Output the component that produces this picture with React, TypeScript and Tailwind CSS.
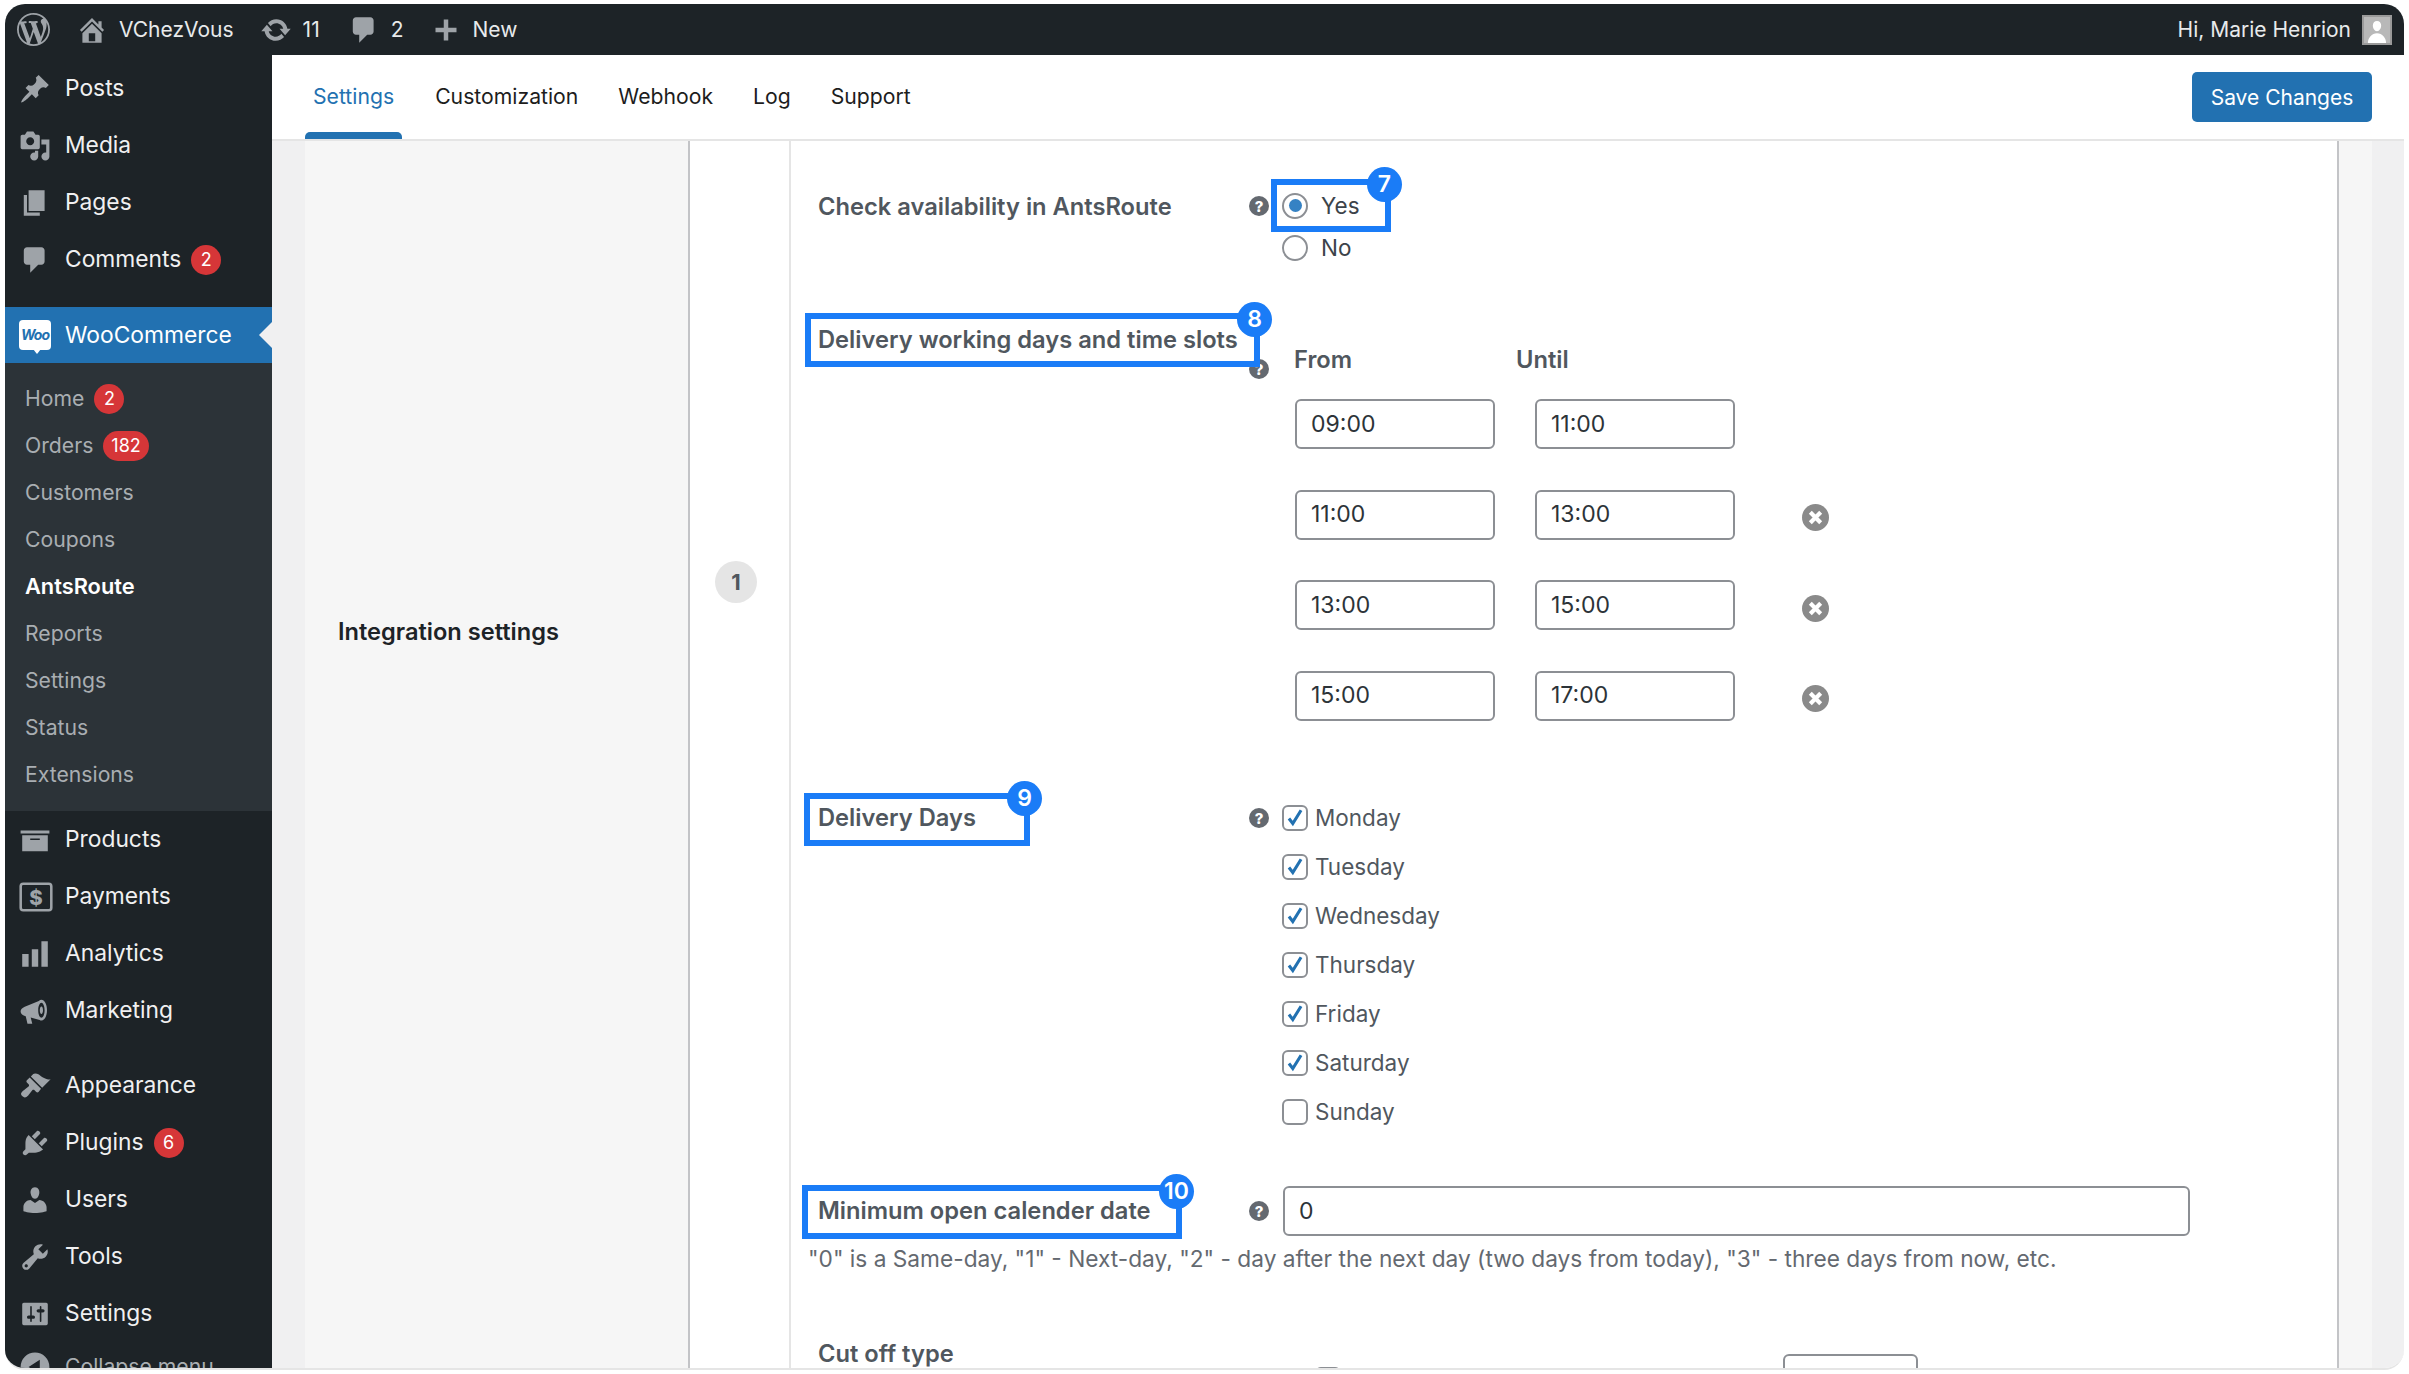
const paths: Record<string, string> = {
  wp: "M20 10c0-5.51-4.49-10-10-10C4.48 0 0 4.49 0 10c0 5.52 4.48 10 10 10 5.51 0 10-4.48 10-10zM7.78 15.37L4.37 6.22c.55-.02 1.17-.08 1.17-.08.5-.06.44-1.13-.06-1.11 0 0-1.45.11-2.37.11-.18 0-.37 0-.58-.01C4.12 2.69 6.87 1.11 10 1.11c2.33 0 4.45.87 6.05 2.34-.68-.11-1.65.39-1.65 1.58 0 .74.45 1.36.9 2.1.35.61.55 1.36.55 2.46 0 1.49-1.4 5-1.4 5l-3.03-8.37c.54-.02.82-.17.82-.17.5-.05.44-1.25-.06-1.22 0 0-1.44.12-2.38.12-.87 0-2.33-.12-2.33-.12-.5-.03-.56 1.2-.06 1.22l.92.08 1.26 3.41zM17.41 10c.24-.64.74-1.87.43-4.25.7 1.29 1.05 2.71 1.05 4.25 0 3.29-1.73 6.24-4.4 7.78.97-2.59 1.94-5.2 2.92-7.78zM6.1 18.09C3.12 16.65 1.11 13.53 1.11 10c0-1.3.23-2.48.72-3.59C3.25 10.3 4.67 14.2 6.1 18.09zm4.03-6.63l2.58 6.98c-.86.29-1.76.45-2.71.45-.79 0-1.57-.11-2.29-.33.81-2.38 1.62-4.74 2.42-7.1z",
  home: "M16 8.5l1.53 1.53-1.06 1.06L10 4.62l-6.47 6.47-1.06-1.06L10 2.5l4 4v-2h2v4zm-6-2.46l6 5.99V18H4v-5.97zM12 17v-5H8v5h4z",
  update: "M10.2 3.28c3.53 0 6.43 2.61 6.92 6h2.08l-3.5 4-3.5-4h2.32c-.45-1.97-2.21-3.45-4.32-3.45-1.45 0-2.73.71-3.54 1.78L4.95 5.66C6.23 4.2 8.11 3.28 10.2 3.28zm-.4 13.44c-3.52 0-6.43-2.61-6.92-6H.8l3.5-4c1.17 1.33 2.33 2.67 3.5 4H5.48c.45 1.97 2.21 3.45 4.32 3.45 1.45 0 2.73-.71 3.54-1.78l1.71 1.95c-1.28 1.46-3.15 2.38-5.25 2.38z",
  comment: "M5 2h9c1.1 0 2 .9 2 2v7c0 1.1-.9 2-2 2h-2l-5 5v-5H5c-1.1 0-2-.9-2-2V4c0-1.1.9-2 2-2z",
  plus: "M17 8.5v3h-5.5V17h-3v-5.5H3v-3h5.5V3h3v5.5z",
  posts: "M10.44 3.02l1.82-1.82 6.36 6.35-1.83 1.82c-1.05-.68-2.48-.57-3.41.36l-.75.75c-.92.93-1.04 2.35-.35 3.41l-1.83 1.82-2.41-2.41-2.8 2.79c-.42.42-3.38 2.71-3.8 2.29s1.86-3.39 2.28-3.81l2.79-2.79L4.1 9.36l1.83-1.82c1.05.69 2.48.57 3.41-.36l.75-.75c.93-.92 1.04-2.35.35-3.41z",
  media: "M13 11V4c0-.55-.45-1-1-1h-1.67L9 1H5L3.67 3H2c-.55 0-1 .45-1 1v7c0 .55.45 1 1 1h10c.55 0 1-.45 1-1zM7 4.5c1.38 0 2.5 1.12 2.5 2.5S8.38 9.5 7 9.5 4.5 8.38 4.5 7 5.62 4.5 7 4.5zM14 6h5v10.5c0 1.38-1.12 2.5-2.5 2.5S14 17.88 14 16.5s1.12-2.5 2.5-2.5c.17 0 .34.02.5.05V9h-3V6zm-4 8.05V13h2v3.5c0 1.38-1.12 2.5-2.5 2.5S7 17.88 7 16.5 8.12 14 9.5 14c.17 0 .34.02.5.05z",
  pages: "M6 15V2h10v13H6zm-1 1h8v2H3V5h2v11z",
  products: "M19 4v2H1V4h18zM2 7h16v10H2V7zm11 3V9H7v1h6z",
  analytics: "M18 18V2h-4v16h4zm-6 0V7H8v11h4zm-6 0v-8H2v8h4z",
  marketing: "M17.5 9.5c0-3.6-1.6-6.5-3.5-6.500-.6 0-1.100.3-1.600.8L3.600 7.300C2 8 1 8.900 1 10.200c0 1.300.9 2.300 2.300 2.800l.9.3L5.300 18h3l-1-4 5.600 1.600c.3.2.7.4 1.100.4 1.900 0 3.500-2.900 3.500-6.500zM14 14.200c-1 0-2-2-2-4.700s1-4.700 2-4.700 2 2 2 4.700-1 4.700-2 4.700zm0-7c-.6 0-1 1-1 2.300s.4 2.300 1 2.300 1-1 1-2.300-.4-2.300-1-2.300z",
  appearance: "M14.48 11.06L7.41 3.99l1.5-1.5c.5-.56 2.3-.47 3.51.32 1.21.8 1.43 1.28 2.91 2.1 1.18.64 2.45 1.26 4.45.85zm-.71.71L6.7 4.7 4.93 6.47c-.39.39-.39 1.02 0 1.41l1.06 1.06c.39.39.39 1.03 0 1.42-.6.6-1.43 1.11-2.21 1.69-.35.26-.7.53-1.01.84-1.5 1.5-2.1 2.09-.6 3.59 1.5 1.5 3 0 3.6-.6.31-.31.58-.66.84-1.01.58-.78 1.09-1.61 1.69-2.21.39-.39 1.03-.39 1.42 0l1.06 1.06c.39.39 1.02.39 1.41 0z",
  plugins: "M13.11 4.36L9.87 7.6 8 5.73l3.24-3.24c.35-.34 1.05-.2 1.56.32.52.51.66 1.21.31 1.55zm-8 1.77l.91-1.12 9.01 9.01-1.19.84c-.71.71-2.63 1.16-3.82 1.16H6.14L4.9 17.26c-.59.59-1.54.59-2.12 0-.59-.58-.59-1.53 0-2.12l1.24-1.24v-3.88c0-1.13.4-3.19 1.09-3.89zm7.26 3.97l3.24-3.24c.34-.35 1.04-.21 1.55.31.52.51.66 1.21.31 1.55l-3.24 3.25z",
  users: "M10 9.25c-2.27 0-2.73-3.44-2.73-3.44C7 4.02 7.82 2 9.97 2c2.16 0 2.98 2.02 2.71 3.81 0 0-.41 3.44-2.68 3.44zm0 2.57L12.72 10c2.39 0 4.52 2.33 4.52 4.53v2.49s-3.65 1.13-7.24 1.13c-3.65 0-7.24-1.13-7.24-1.13v-2.49c0-2.25 1.94-4.48 4.47-4.48z",
  tools: "M16.68 9.77c-1.34 1.34-3.3 1.67-4.95.99l-5.41 6.52c-.99.99-2.59.99-3.58 0s-.99-2.59 0-3.57l6.52-5.42c-.68-1.65-.35-3.61.99-4.95 1.28-1.28 3.12-1.62 4.72-1.06l-2.89 2.89 2.82 2.82 2.86-2.87c.53 1.58.18 3.39-1.08 4.65zM3.81 16.21c.4.39 1.04.39 1.43 0 .4-.4.4-1.04 0-1.43-.39-.4-1.03-.4-1.43 0-.39.39-.39 1.03 0 1.43z",
  settings: "M18 16V4c0-.55-.45-1-1-1H3c-.55 0-1 .45-1 1v12c0 .55.45 1 1 1h14c.55 0 1-.45 1-1zM8 11h1c.55 0 1 .45 1 1s-.45 1-1 1H8v1.5c0 .28-.22.5-.5.5s-.5-.22-.5-.5V13H6c-.55 0-1-.45-1-1s.45-1 1-1h1V5.5c0-.28.22-.5.5-.5s.5.22.5.5V11zm5-2h-1c-.55 0-1-.45-1-1s.45-1 1-1h1V5.5c0-.28.22-.5.5-.5s.5.22.5.5V7h1c.55 0 1 .45 1 1s-.45 1-1 1h-1v5.5c0 .28-.22.5-.5.5s-.5-.22-.5-.5V9z",
  collapse: "M10 1a9 9 0 1 0 0 18 9 9 0 0 0 0-18zm3 4.5v9L6 10z",
};

const Icon = ({ name, className }: { name: string; className: string }) => (
  <svg viewBox="0 0 20 20" className={`fill-current shrink-0 ${className}`}>
    <path d={paths[name]} fillRule="evenodd" />
  </svg>
);

const PaymentsIcon = () => (
  <svg viewBox="0 0 20 20" className="w-[34px] h-[34px] shrink-0">
    <rect x="1" y="2.2" width="18" height="15.6" rx="1.5" fill="none" stroke="currentColor" strokeWidth="1.5" />
    <text x="10" y="14.6" textAnchor="middle" fontSize="12" fontWeight="800" fill="currentColor" fontFamily="Inter">$</text>
  </svg>
);

const WooIcon = () => (
  <div className="relative w-[32px] h-[30px] rounded-[4px] bg-white flex items-center justify-center shrink-0">
    <span className="text-[#2271b1] text-[14px] font-bold italic leading-none tracking-[-1px]">Woo</span>
    <span className="absolute left-[14px] -bottom-[4px] w-0 h-0 border-x-[4px] border-x-transparent border-t-[5px] border-t-white" />
  </div>
);

const Badge = ({ value }: { value: string }) => (
  <span className="h-[30px] min-w-[30px] px-[8px] ml-[10px] rounded-full bg-[#d63638] text-white text-[18px] font-normal flex items-center justify-center">
    {value}
  </span>
);

const NavRow = ({ icon, label, badge }: { icon: string; label: string; badge?: string }) => (
  <div className="h-[57px] flex items-center">
    <div className="w-[61px] pl-[14px] text-[#9ea3a8]">
      {icon === "payments" ? <PaymentsIcon /> : <Icon name={icon} className="w-[32px] h-[32px]" />}
    </div>
    <span className="text-[22.8px] text-[#f0f0f1] -ml-px">{label}</span>
    {badge && <Badge value={badge} />}
  </div>
);

const subItems: { label: string; badge?: string; active?: boolean }[] = [
  { label: "Home", badge: "2" },
  { label: "Orders", badge: "182" },
  { label: "Customers" },
  { label: "Coupons" },
  { label: "AntsRoute", active: true },
  { label: "Reports" },
  { label: "Settings" },
  { label: "Status" },
  { label: "Extensions" },
];

const Sidebar = () => (
  <aside className="w-[267px] shrink-0 bg-[#1d2327] pt-[5px]">
    <NavRow icon="posts" label="Posts" />
    <NavRow icon="media" label="Media" />
    <NavRow icon="pages" label="Pages" />
    <NavRow icon="comment" label="Comments" badge="2" />
    <div className="relative mt-[19px] h-[56px] bg-[#2271b1] flex items-center">
      <div className="w-[60px] pl-[14px]">
        <WooIcon />
      </div>
      <span className="text-[22.8px] text-white">WooCommerce</span>
      <span className="absolute right-0 top-[15px] w-0 h-0 border-y-[13px] border-y-transparent border-r-[13px] border-r-[#f0f0f1]" />
    </div>
    <div className="bg-[#2c3338] pt-[12px] pb-[13px] pl-[20px]">
      {subItems.map((s) => (
        <div key={s.label} className="h-[47px] flex items-center">
          <span className={s.active ? "text-[21.8px] text-white font-semibold" : "text-[21.2px] text-[#a9aeb2]"}>{s.label}</span>
          {s.badge && <Badge value={s.badge} />}
        </div>
      ))}
    </div>
    <NavRow icon="products" label="Products" />
    <NavRow icon="payments" label="Payments" />
    <NavRow icon="analytics" label="Analytics" />
    <NavRow icon="marketing" label="Marketing" />
    <div className="h-[18px]" />
    <NavRow icon="appearance" label="Appearance" />
    <NavRow icon="plugins" label="Plugins" badge="6" />
    <NavRow icon="users" label="Users" />
    <NavRow icon="tools" label="Tools" />
    <NavRow icon="settings" label="Settings" />
    <div className="h-[49px] flex items-center">
      <div className="w-[61px] pl-[14px] text-[#9ea3a8]">
        <Icon name="collapse" className="w-[32px] h-[32px]" />
      </div>
      <span className="text-[21.2px] text-[#a9aeb2] -ml-px">Collapse menu</span>
    </div>
  </aside>
);

const TopBar = () => (
  <header className="h-[51px] shrink-0 bg-[#1d2327] flex items-center pl-[12px] pr-[12px] text-[21px] text-[#e8eaeb]">
    <Icon name="wp" className="w-[33px] h-[33px] text-[#9ea3a8]" />
    <Icon name="home" className="w-[32px] h-[32px] ml-[26px] text-[#9ea3a8]" />
    <span className="ml-[11px]">VChezVous</span>
    <Icon name="update" className="w-[32px] h-[32px] ml-[26px] text-[#9ea3a8]" />
    <span className="ml-[11px]">11</span>
    <Icon name="comment" className="w-[32px] h-[32px] ml-[28px] text-[#9ea3a8]" />
    <span className="ml-[11px]">2</span>
    <Icon name="plus" className="w-[30px] h-[30px] ml-[27px] text-[#9ea3a8]" />
    <span className="ml-[12px]">New</span>
    <span className="ml-auto">Hi, Marie Henrion</span>
    <div className="ml-[11px] w-[30px] h-[30px] bg-[#b8b8b8] border-[2px] border-[#9a9a9a] overflow-hidden flex justify-center">
      <svg viewBox="0 0 20 20" className="w-[26px] h-[26px] fill-white">
        <path d="M10 3c2 0 3.2 1.6 3.2 3.6S12 11 10 11 6.800 8.600 6.800 6.600 8 3 10 3zM3 20c0-4 3-7.500 7-7.500s7 3.500 7 7.500z" />
      </svg>
    </div>
  </header>
);

const tabs = ["Settings", "Customization", "Webhook", "Log", "Support"];

const TabBar = () => (
  <div className="h-[86px] shrink-0 bg-white border-b-[2px] border-[#e5e5e5] flex items-start pl-[33px] pr-[32px]">
    {tabs.map((t, i) => (
      <div key={t} className={`relative h-[84px] flex items-start pt-[23px] text-[21.2px] leading-[36px] ${i === 0 ? "text-[#2271b1] px-[8px] mr-[33px]" : "text-[#1d1d1d] mr-[40px]"}`}>
        {t}
        {i === 0 && <span className="absolute left-0 right-0 bottom-0 h-[7px] rounded-t-[5px] bg-[#2271b1]" />}
      </div>
    ))}
    <button className="ml-auto mt-[17px] w-[180px] h-[50px] pt-px rounded-[5px] bg-[#2271b1] text-white text-[21px]">Save Changes</button>
  </div>
);

const Callout = ({ n, box, dot }: { n: string; box: string; dot: string }) => (
  <>
    <span className={`absolute border-[6px] border-[#1a7cf7] pointer-events-none ${box}`} />
    <span className={`absolute w-[35px] h-[35px] rounded-full bg-[#1a7cf7] text-white text-[23px] font-semibold flex items-center justify-center ${dot}`}>
      {n}
    </span>
  </>
);

const Help = ({ className = "" }: { className?: string }) => (
  <span className={`w-[20px] h-[20px] rounded-full bg-[#646970] text-white text-[15px] font-extrabold leading-none flex items-center justify-center shrink-0 ${className}`}>?</span>
);

const Radio = ({ label, checked }: { label: string; checked?: boolean }) => (
  <div className="flex items-center h-[27px] text-[22.5px] text-[#3c434a]">
    <span className="w-[26px] h-[26px] rounded-full border-[2px] border-[#8c8f94] bg-white flex items-center justify-center">
      {checked && <span className="w-[13px] h-[13px] rounded-full bg-[#3582c4]" />}
    </span>
    <span className="ml-[13px]">{label}</span>
  </div>
);

const TimeInput = ({ value }: { value: string }) => (
  <div className="w-[200px] h-[50px] rounded-[6px] border-[2px] border-[#8c8f94] bg-white flex items-center pl-[14px] text-[23px] text-[#2c3338]">
    {value}
  </div>
);

const slots = [
  ["09:00", "11:00"],
  ["11:00", "13:00"],
  ["13:00", "15:00"],
  ["15:00", "17:00"],
];

const days = [
  { d: "Monday", on: true },
  { d: "Tuesday", on: true },
  { d: "Wednesday", on: true },
  { d: "Thursday", on: true },
  { d: "Friday", on: true },
  { d: "Saturday", on: true },
  { d: "Sunday", on: false },
];

const labelCls = "w-[431px] shrink-0 text-[23.7px] font-semibold text-[#50575e]";

const Form = () => (
  <div className="relative flex-1 bg-white pl-[27px] overflow-hidden">
    {/* availability */}
    <div className="flex mt-[51px]">
      <div className={`${labelCls} leading-[30px]`}>Check availability in AntsRoute</div>
      <Help className="mt-[4px]" />
      <div className="ml-[13px] flex flex-col gap-[15px]">
        <Radio label="Yes" checked />
        <Radio label="No" />
      </div>
      <Callout n="7" box="left-[480px] top-[38px] w-[120px] h-[53px]" dot="left-[576px] top-[26px]" />
    </div>

    {/* time slots */}
    <div className="flex mt-[65px]">
      <div className={`${labelCls} leading-[28px]`}>Delivery working days and time slots</div>
      <Help className="mt-[33px]" />
      <div className="ml-[13px] pt-[19px]">
        <div className="flex text-[23.7px] font-semibold text-[#50575e] leading-[30px] pl-[12px]">
          <span className="w-[222px]">From</span>
          <span>Until</span>
        </div>
        <div className="mt-[24px] flex flex-col gap-[40.5px] pl-[13px]">
          {slots.map((s, i) => (
            <div key={i} className="flex items-center">
              <TimeInput value={s[0]} />
              <div className="ml-[40px]">
                <TimeInput value={s[1]} />
              </div>
              {i > 0 && (
                <svg viewBox="0 0 26 26" className="w-[27px] h-[27px] ml-[67px] mt-[6px]">
                  <circle cx="13" cy="13" r="13" fill="#8a8a8a" />
                  <path d="M8 8l10 10M18 8L8 18" stroke="#fff" strokeWidth="4" />
                </svg>
              )}
            </div>
          ))}
        </div>
      </div>
      <Callout n="8" box="left-[14px] top-[172px] w-[455px] h-[54px]" dot="left-[446px] top-[161px]" />
    </div>

    {/* delivery days */}
    <div className="flex mt-[84.5px]">
      <div className={`${labelCls} leading-[26px]`}>Delivery Days</div>
      <Help className="mt-[3px]" />
      <div className="ml-[13px] flex flex-col gap-[23px]">
        {days.map(({ d, on }) => (
          <div key={d} className="flex items-center h-[26px] text-[22.5px] text-[#50575e]">
            <span className="w-[26px] h-[26px] rounded-[6px] border-[2px] border-[#8c8f94] bg-white flex items-center justify-center">
              {on && (
                <svg viewBox="0 0 20 20" className="w-[22px] h-[22px]">
                  <path d="M4.500 10.500l3.500 4.500 7.500-12" fill="none" stroke="#2271b1" strokeWidth="2.800" />
                </svg>
              )}
            </span>
            <span className="ml-[7px]">{d}</span>
          </div>
        ))}
      </div>
      <Callout n="9" box="left-[13px] top-[652px] w-[226px] h-[53px]" dot="left-[216px] top-[640px]" />
    </div>

    {/* minimum date */}
    <div className="flex items-center mt-[61px]">
      <div className={labelCls}>Minimum open calender date</div>
      <Help />
      <div className="ml-[14px] w-[907px] h-[50px] rounded-[6px] border-[2px] border-[#8c8f94] bg-white flex items-center pl-[14px] text-[23px] text-[#2c3338]">0</div>
      <Callout n="10" box="left-[11px] top-[1044px] w-[380px] h-[54px]" dot="left-[368px] top-[1033px]" />
    </div>
    <p className="mt-[8px] -ml-[10px] text-[22.7px] leading-[30px] text-[#646970]">
      "0" is a Same-day, "1" - Next-day, "2" - day after the next day (two days from today), "3" - three days from now, etc.
    </p>

    {/* cut off */}
    <div className="flex mt-[64.5px]">
      <div className={`${labelCls} leading-[30px]`}>Cut off type</div>
      <div className="ml-[66px] mt-[28.5px] w-[26px] h-[26px] rounded-[6px] border-[2px] border-[#8c8f94]" />
      <span className="ml-[8px] mt-[25.5px] text-[22.5px] text-[#50575e]">Rolling cut off time</span>
      <div className="absolute left-[992px] top-[1213px] w-[135px] h-[50px] rounded-[6px] border-[2px] border-[#8c8f94]" />
    </div>
  </div>
);

const Main = () => (
  <main className="flex-1 flex flex-col bg-[#f0f0f1] min-w-0">
    <TabBar />
    <div className="flex flex-1 min-h-0">
      <div className="w-[33px] shrink-0" />
      <section className="w-[383px] shrink-0 bg-[#f6f6f6] pl-[33px] pt-[476px]">
        <h2 className="text-[23.6px] leading-[30px] font-semibold text-[#1d2327]">Integration settings</h2>
      </section>
      <div className="w-[103px] shrink-0 bg-white border-x-[2px] border-l-[#c3c4c7] border-r-[#e5e5e5] flex justify-center pr-[7px] pt-[420px]">
        <span className="w-[42px] h-[42px] rounded-full bg-[#e5e5e5] text-[#50575e] text-[22px] font-bold flex items-center justify-center">1</span>
      </div>
      <Form />
      <div className="w-[35px] shrink-0 bg-[#f6f6f6] border-l-[2px] border-[#c3c4c7]" />
      <div className="w-[32px] shrink-0" />
    </div>
  </main>
);

const App = () => (
  <div className="w-[2409px] h-[1374px] bg-white overflow-hidden pt-[4px] pl-[5px] pr-[5px] font-['Inter',sans-serif]">
    <div className="w-full h-[1366px] rounded-[20px] overflow-hidden flex flex-col border-b-[2px] border-[#e5e5e5]">
      <TopBar />
      <div className="flex flex-1 min-h-0">
        <Sidebar />
        <Main />
      </div>
    </div>
  </div>
);

export default App;
